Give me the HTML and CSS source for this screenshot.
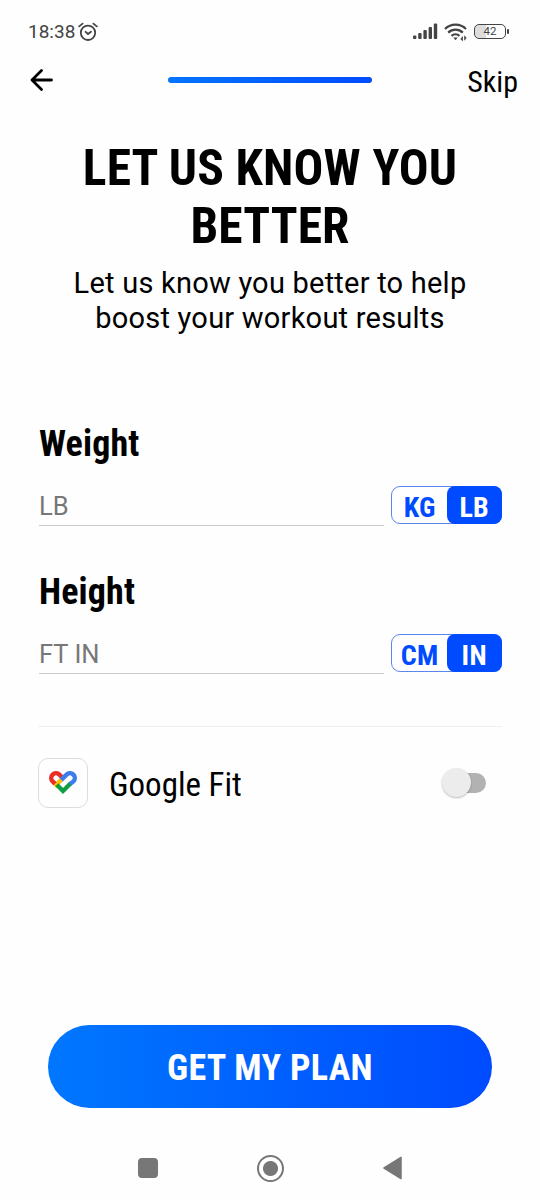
FILE: index.html
```html
<!DOCTYPE html>
<html lang="en">
<head>
<meta charset="utf-8">
<title>Let us know you better</title>
<link rel="stylesheet" href="styles.css">
</head>
<body>
<div class="screen">
  <header class="status">
    <span class="time">18:38</span>
    <svg class="alarm" width="20" height="20" viewBox="0 0 20 20" fill="none" stroke="#444" stroke-width="1.8" stroke-linecap="round"><circle cx="10" cy="10.8" r="7.2"/><path d="M1.2 4.4 4.6 1.600M18.8 4.4 15.4 1.600M7.6 9.8 10 12l3-2.2"/></svg>
    <svg class="signal" width="25" height="17" viewBox="0 0 25 17" fill="#444"><rect x="0" y="12.5" width="3.400" height="3.5" rx="1"/><rect x="5.2" y="10" width="3.400" height="6" rx="1"/><rect x="10.4" y="7" width="3.400" height="9" rx="1"/><rect x="15.6" y="4" width="3.400" height="12" rx="1"/><rect x="20.800" y="0.5" width="3.400" height="15.5" rx="1"/></svg>
    <svg class="wifi" width="24" height="18" viewBox="0 0 24 18" fill="none" stroke="#444" stroke-width="2.2"><path d="M1 6a15 15 0 0 1 21 0M4.2 9.600a10.5 10.5 0 0 1 14.6 0M7.500 12.900a6 6 0 0 1 8 0"/><path d="M9.3 14.600h4.400l-2.200 2.600z" fill="#444" stroke="none"/><path d="M18.300 13.500v3.500l-1.500-1.500M20.800 17.300v-3.500l1.500 1.500" stroke-width="1.200"/></svg>
    <div class="battery">42</div><div class="nub"></div>
  </header>
  <nav class="topbar">
    <svg class="back" width="24" height="24" viewBox="0 0 24 24" fill="none" stroke="#000" stroke-width="2.8" stroke-linecap="round" stroke-linejoin="round"><path d="M21.500 12H2M11.500 2.600 2 12l9.500 9.400"/></svg>
    <div class="progress"></div>
    <span class="skip cond">Skip</span>
  </nav>
  <h1 class="title cond">LET US KNOW YOU<br>BETTER</h1>
  <p class="subtitle">Let us know you better to help<br>boost your workout results</p>
  <section class="field weight">
    <h2 class="label cond">Weight</h2>
    <div class="row"><div class="input">LB</div><div class="units"><span class="unit"><b class="cond">KG</b></span><span class="unit on"><b class="cond">LB</b></span></div></div>
  </section>
  <section class="field height">
    <h2 class="label cond">Height</h2>
    <div class="row"><div class="input">FT IN</div><div class="units"><span class="unit"><b class="cond">CM</b></span><span class="unit on"><b class="cond">IN</b></span></div></div>
  </section>
  <section class="fit">
    <div class="fit-icon"><svg width="28" height="24" viewBox="0 0 28 24" fill="none" stroke-width="4.400"><path d="M4.500 11.300 9 15.800M12.800 8.200 7.500 13.500" stroke="#fbbc04"/><path d="M13.500 6.700 10.400 3.600A4.800 4.800 0 0 0 3.600 10.400L6 12.800" stroke="#ea2f26"/><path d="M7.800 13.800 14 20 21.500 12.500" stroke="#0f9d45"/><path d="M21 13 24.400 10.400A4.800 4.800 0 0 0 17.600 3.600L12.300 8.900" stroke="#3b7ded"/></svg></div>
    <span class="fit-name cond">Google Fit</span>
    <div class="switch"><div class="knob"></div></div>
  </section>
  <div class="cta"><span class="cond">GET MY PLAN</span></div>
  <footer class="sysnav">
    <div class="recent"></div>
    <div class="home"></div>
    <svg class="prev" width="20" height="24" viewBox="0 0 20 24"><path d="M18 1.500v21L1 12z" fill="#777" stroke="#777" stroke-width="1.500" stroke-linejoin="round"/></svg>
  </footer>
</div>
</body>
</html>
```
FILE: styles.css
```css
* { box-sizing: border-box; margin: 0; padding: 0; }
body { background: #fefefe; color: #000; font-family: Roboto, sans-serif; }
.screen { width: 540px; height: 1200px; display: flex; flex-direction: column; overflow: hidden; }
.cond { font-family: "Roboto Condensed", Roboto, sans-serif; font-stretch: 75%; }
.status { height: 58px; padding: 5px 31px 0 28px; display: flex; align-items: center; color: #444; }
.time { font-size: 19px; line-height: 22px; }
.alarm { margin-left: 3px; }
.signal { margin-left: auto; }
.wifi { margin-left: 6px; }
.battery { width: 32px; height: 15px; margin-left: 6px; border: 1.500px solid #444; border-radius: 5px; font-size: 11.500px; line-height: 13px; text-align: center; background: linear-gradient(90deg, #ddd 38%, transparent 38%); }
.nub { width: 2px; height: 5px; margin-left: 1px; border-radius: 1px; background: #444; }
.topbar { height: 44px; padding: 0 22px 0 30px; display: flex; align-items: center; }
.progress { width: 204px; height: 6px; margin-left: 114px; border-radius: 3px; background: linear-gradient(90deg, #0075ff, #004bff); }
.skip { margin: 3px 0 0 auto; font-size: 30px; }
.title { margin-top: 37px; font-size: 49.500px; line-height: 58px; font-weight: 700; letter-spacing: .15px; text-align: center; }
.subtitle { margin-top: 11px; font-size: 29px; line-height: 35px; letter-spacing: .23px; text-align: center; }
.field { padding: 0 38px 0 39px; }
.weight { margin-top: 87px; }
.height { margin-top: 45px; }
.label { font-size: 36px; line-height: 42px; letter-spacing: .15px; }
.row { margin-top: 22px; display: flex; justify-content: space-between; align-items: flex-start; }
.input { width: 345px; height: 39px; border-bottom: 1px solid #ccc; color: #777; font-size: 25.500px; line-height: 39px; }
.units { width: 111px; height: 38px; margin-top: -1px; border: 1px solid #5c86ee; border-radius: 9px; display: flex; background: #fff; }
.unit { flex: 1; color: #004bff; font-size: 28px; line-height: 42px; letter-spacing: .3px; text-align: center; }
.on { margin: -1px; background: #004bff; color: #fff; line-height: 44px; border-radius: 8px; }
.fit { margin: 52px 38px 0; padding-top: 31px; border-top: 1px solid #eee; display: flex; align-items: center; }
.fit-icon { width: 50px; height: 50px; border: 1px solid #ddd; border-radius: 10px; display: grid; place-items: center; }
.fit-name { margin: 3px 0 0 21px; font-size: 33px; }
.switch { margin: 0 16px 0 auto; width: 40px; height: 20px; border-radius: 10px; background: #b2b2b2; }
.knob { width: 29px; height: 29px; margin: -5px 0 0 -4px; border-radius: 50%; background: #ececec; box-shadow: 0 1px 2px #0004; }
.cta { width: 444px; height: 83px; margin: auto auto 0; border-radius: 42px; background: linear-gradient(90deg, #0077ff, #004bff); color: #fff; font-weight: 700; font-size: 36px; line-height: 87px; letter-spacing: .35px; text-align: center; }
.sysnav { height: 92px; padding: 28px 137px 0 138px; display: flex; align-items: center; justify-content: space-between; }
.recent { width: 20px; height: 20px; border-radius: 4px; background: #777; }
.home { width: 27px; height: 27px; border: 2px solid #777; border-radius: 50%; background: radial-gradient(#777 7px, transparent 8px); }
```
